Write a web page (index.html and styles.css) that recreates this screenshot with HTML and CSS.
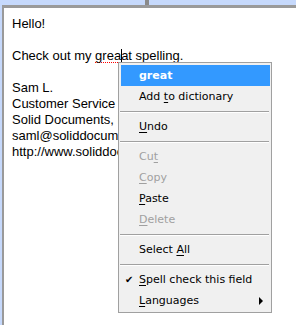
FILE: index.html
```html
<!DOCTYPE html>
<html lang="en">
<head>
<meta charset="UTF-8" />
<title>Spell check</title>
<link rel="stylesheet" href="styles.css">
</head>
<body>
<div class="frame">
  <div class="grip"></div>
  <div class="editor">
    <p>Hello!</p>
    <p>Check out my <span class="misspelled">grea<span class="caret"></span>at</span> spelling.</p>
    <p>
      Sam L.<br />
      Customer Service<br />
      Solid Documents, LLC<br />
      saml@soliddocuments.com<br />
      http://www.soliddocuments.com
    </p>

    <ul class="menu">
      <li class="item active">great</li>
      <li class="item">Add <u>t</u>o dictionary</li>
      <li class="sep"></li>
      <li class="item"><u>U</u>ndo</li>
      <li class="sep"></li>
      <li class="item disabled">Cu<u>t</u></li>
      <li class="item disabled"><u>C</u>opy</li>
      <li class="item"><u>P</u>aste</li>
      <li class="item disabled"><u>D</u>elete</li>
      <li class="sep"></li>
      <li class="item">Select <u>A</u>ll</li>
      <li class="sep"></li>
      <li class="item checked"><span class="check">&#10004;</span><u>S</u>pell check this field</li>
      <li class="item submenu"><u>L</u>anguages<span class="arrow"></span></li>
    </ul>
  </div>
</div>
</body>
</html>
```

FILE: styles.css
```css
body {
  margin: 0;
  background: #ffffff;
}

.frame {
  position: relative;
  height: 325px;
  box-sizing: border-box;
  padding: 5px 0 0 2px;
  background: #c6d9fc;
}

.grip {
  position: absolute;
  left: 145px;
  top: 0;
  width: 4px;
  height: 5px;
  background: #8a8a8a;
}

.editor {
  position: relative;
  height: 100%;
  box-sizing: border-box;
  padding: 8px 0 0 8px;
  border-top: 3px solid #9a9a9a;
  border-left: 2px solid #9a9a9a;
  background: #ffffff;
  font-family: "Liberation Sans", Arial, sans-serif;
  font-size: 13px;
  line-height: 16px;
  color: #000;
  overflow: hidden;
  white-space: nowrap;
}

.editor p {
  margin: 0 0 16px;
}

.misspelled {
  position: relative;
  background-image: repeating-linear-gradient(to right, #ff0000 0 1px, transparent 1px 2px);
  background-size: 100% 1px;
  background-position: left bottom;
  background-repeat: no-repeat;
}

.caret {
  display: inline-block;
  width: 1px;
  height: 14px;
  margin: 0 -1px 0 0;
  background: #000;
  vertical-align: -3px;
}

/* context menu */
.menu {
  position: absolute;
  left: 114px;
  top: 54px;
  width: 154px;
  height: 251px;
  box-sizing: border-box;
  margin: 0;
  padding: 2px 1px 2px 2px;
  list-style: none;
  background: #f0f0f0;
  border: 1px solid #a0a0a0;
  font-family: "DejaVu Sans", Verdana, sans-serif;
  font-size: 11px;
  line-height: 21px;
  color: #000;
}

.item {
  position: relative;
  height: 21px;
  padding-left: 18px;
}

.item u {
  text-decoration-thickness: 1px;
  text-underline-offset: 2px;
}

.active {
  background: #3399ff;
  color: #fff;
  font-weight: bold;
}

.disabled {
  color: #a0a0a0;
}

.sep {
  height: 9px;
  margin: 0 1px 0 -1px;
  background: linear-gradient(#f0f0f0 0 4px, #a0a0a0 4px 5px, #ffffff 5px 6px, #f0f0f0 6px);
}

.check {
  position: absolute;
  left: 4px;
  top: 0;
  font-size: 10px;
  font-weight: bold;
}

.arrow {
  position: absolute;
  right: 7px;
  top: 7px;
  width: 0;
  height: 0;
  border-top: 4px solid transparent;
  border-bottom: 4px solid transparent;
  border-left: 4px solid #000;
}
```
